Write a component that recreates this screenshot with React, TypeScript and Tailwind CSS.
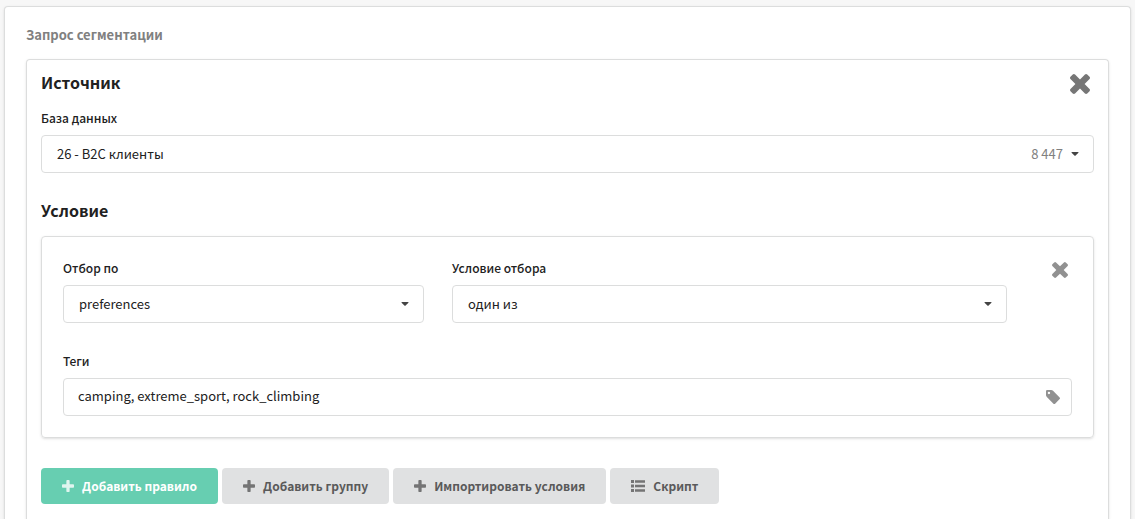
import type { ReactNode, SelectHTMLAttributes } from 'react';

interface GlyphProps {
  className: string;
}

function TimesIcon({ className }: GlyphProps) {
  return (
    <svg viewBox="302 366 1188 1188" fill="currentColor" className={className} aria-hidden>
      <path d="M1490 1322q0 40-28 68l-136 136q-28 28-68 28t-68-28l-294-294-294 294q-28 28-68 28t-68-28l-136-136q-28-28-28-68t28-68l294-294-294-294q-28-28-28-68t28-68l136-136q28-28 68-28t68 28l294 294 294-294q28-28 68-28t68 28l136 136q28 28 28 68t-28 68l-294 294 294 294q28 28 28 68z" />
    </svg>
  );
}

function PlusIcon({ className }: GlyphProps) {
  return (
    <svg viewBox="192 128 1408 1408" fill="currentColor" className={className} aria-hidden>
      <path d="M1600 736v192q0 40-28 68t-68 28h-416v416q0 40-28 68t-68 28h-192q-40 0-68-28t-28-68v-416h-416q-40 0-68-28t-28-68v-192q0-40 28-68t68-28h416v-416q0-40 28-68t68-28h192q40 0 68 28t28 68v416h416q40 0 68 28t28 68z" />
    </svg>
  );
}

function ListIcon({ className }: GlyphProps) {
  return (
    <svg viewBox="0 0 14 12" fill="currentColor" className={className} aria-hidden>
      <path d="M0 0h3v3H0zM0 4.5h3v3H0zM0 9h3v3H0zM4 .3h10v2.4H4zM4 4.8h10v2.4H4zM4 9.300h10v2.4H4z" />
    </svg>
  );
}

function TagIcon({ className }: GlyphProps) {
  return (
    <svg viewBox="128 128 1515 1515" fill="currentColor" className={className} aria-hidden>
      <path d="M576 448q0-53-37.5-90.5t-90.5-37.5-90.5 37.5-37.5 90.5 37.5 90.5 90.5 37.5 90.5-37.5 37.5-90.5zm1067 576q0 53-37 90l-491 492q-39 37-91 37-53 0-90-37l-715-716q-38-37-64.5-101t-26.5-117v-416q0-52 38-90t90-38h416q53 0 117 26.5t102 64.5l715 714q37 39 37 91z" />
    </svg>
  );
}

function CaretIcon({ className }: GlyphProps) {
  return (
    <svg viewBox="384 640 1024 576" fill="currentColor" className={className} aria-hidden>
      <path d="M1408 704q0 26-19 45l-448 448q-19 19-45 19t-45-19l-448-448q-19-19-19-45t19-45 45-19h896q26 0 45 19t19 45z" />
    </svg>
  );
}

interface FieldProps {
  id: string;
  label: string;
  children: ReactNode;
}

function Field({ id, label, children }: FieldProps) {
  return (
    <div>
      <label htmlFor={id} className="mb-[7px] block text-xs leading-5 font-medium">
        {label}
      </label>
      <div className="relative">{children}</div>
    </div>
  );
}

interface DropdownProps extends SelectHTMLAttributes<HTMLSelectElement> {
  options: string[];
  // Secondary value shown next to the caret, e.g. the number of records.
  note?: string;
}

function Dropdown({ options, note, ...rest }: DropdownProps) {
  return (
    <>
      <select
        {...rest}
        className="block h-[38px] w-full appearance-none rounded border border-[#dcdddd] bg-white pr-20 pl-[15px] text-[13px]"
      >
        {options.map((o) => (
          <option key={o}>{o}</option>
        ))}
      </select>
      <span className="pointer-events-none absolute inset-y-0 right-[15px] flex items-center gap-2">
        {note && <span className="text-[13px] text-[#808080]">{note}</span>}
        <CaretIcon className="h-1 w-2 text-[#444]" />
      </span>
    </>
  );
}

const ACTIONS = [
  { label: 'Добавить правило', Icon: PlusIcon, primary: true },
  { label: 'Добавить группу', Icon: PlusIcon },
  { label: 'Импортировать условия', Icon: PlusIcon },
  { label: 'Скрипт', Icon: ListIcon },
];

export default function App() {
  return (
    <div className="flex min-h-screen flex-col bg-[#f7f7f7] px-1 pt-1.5 font-['Noto_Sans_CJK_SC','Noto_Sans',sans-serif] text-[#212121]">
      <div className="flex flex-1 flex-col rounded-t border border-b-0 border-[#dcdddd] bg-white px-[21px] pt-[18px] shadow-sm">
        <h2 className="mb-3.5 text-[13px] leading-5 font-bold text-[#808080]">Запрос сегментации</h2>

        <section className="flex-1 rounded-t border border-b-0 border-[#dcdddd] px-3.5 pt-2.5 pb-[15px] shadow-sm">
          <div className="mb-3.5 flex items-end justify-between">
            <h3 className="text-base leading-6 font-bold">Источник</h3>
            <button type="button" aria-label="Удалить источник" className="mr-1 text-[#767676]">
              <TimesIcon className="size-5" />
            </button>
          </div>

          <Field id="database" label="База данных">
            <Dropdown id="database" options={['26 - B2C клиенты']} note="8 447" />
          </Field>

          <h3 className="mt-[25px] mb-3.5 text-base leading-6 font-bold">Условие</h3>

          <div className="rounded border border-[#dcdddd] px-[21px] py-[21px] shadow-sm">
            <div className="-mx-3.5 grid grid-cols-16">
              <div className="col-span-6 px-3.5">
                <Field id="attribute" label="Отбор по">
                  <Dropdown id="attribute" options={['preferences']} />
                </Field>
              </div>
              <div className="col-span-9 px-3.5">
                <Field id="operator" label="Условие отбора">
                  <Dropdown id="operator" options={['один из']} />
                </Field>
              </div>
              <div className="flex items-start justify-end px-3.5 pt-1">
                <button type="button" aria-label="Удалить правило" className="mr-1 text-[#919191]">
                  <TimesIcon className="size-4" />
                </button>
              </div>
            </div>

            <div className="mt-7">
              <Field id="tags" label="Теги">
                <input
                  id="tags"
                  type="text"
                  defaultValue="camping, extreme_sport, rock_climbing"
                  className="block h-[38px] w-full rounded border border-[#dcdddd] bg-white pr-10 pb-1 pl-3.5 text-[13px]"
                />
                <span className="pointer-events-none absolute inset-y-0 right-3 flex items-center text-[#919191]">
                  <TagIcon className="size-3.5" />
                </span>
              </Field>
            </div>
          </div>

          <div className="mt-[30px] flex flex-wrap gap-1">
            {ACTIONS.map(({ label, Icon, primary }) => (
              <button
                key={label}
                type="button"
                className={
                  'flex h-9 items-center gap-2 rounded px-[21px] text-xs font-bold ' +
                  (primary ? 'bg-[#67ceb1] text-white' : 'bg-[#e0e1e2] text-[#5a5a5a]')
                }
              >
                <Icon className={label === 'Скрипт' ? 'h-3 w-3.5 opacity-80' : 'size-3 opacity-80'} />
                {label}
              </button>
            ))}
          </div>
        </section>
      </div>
    </div>
  );
}
